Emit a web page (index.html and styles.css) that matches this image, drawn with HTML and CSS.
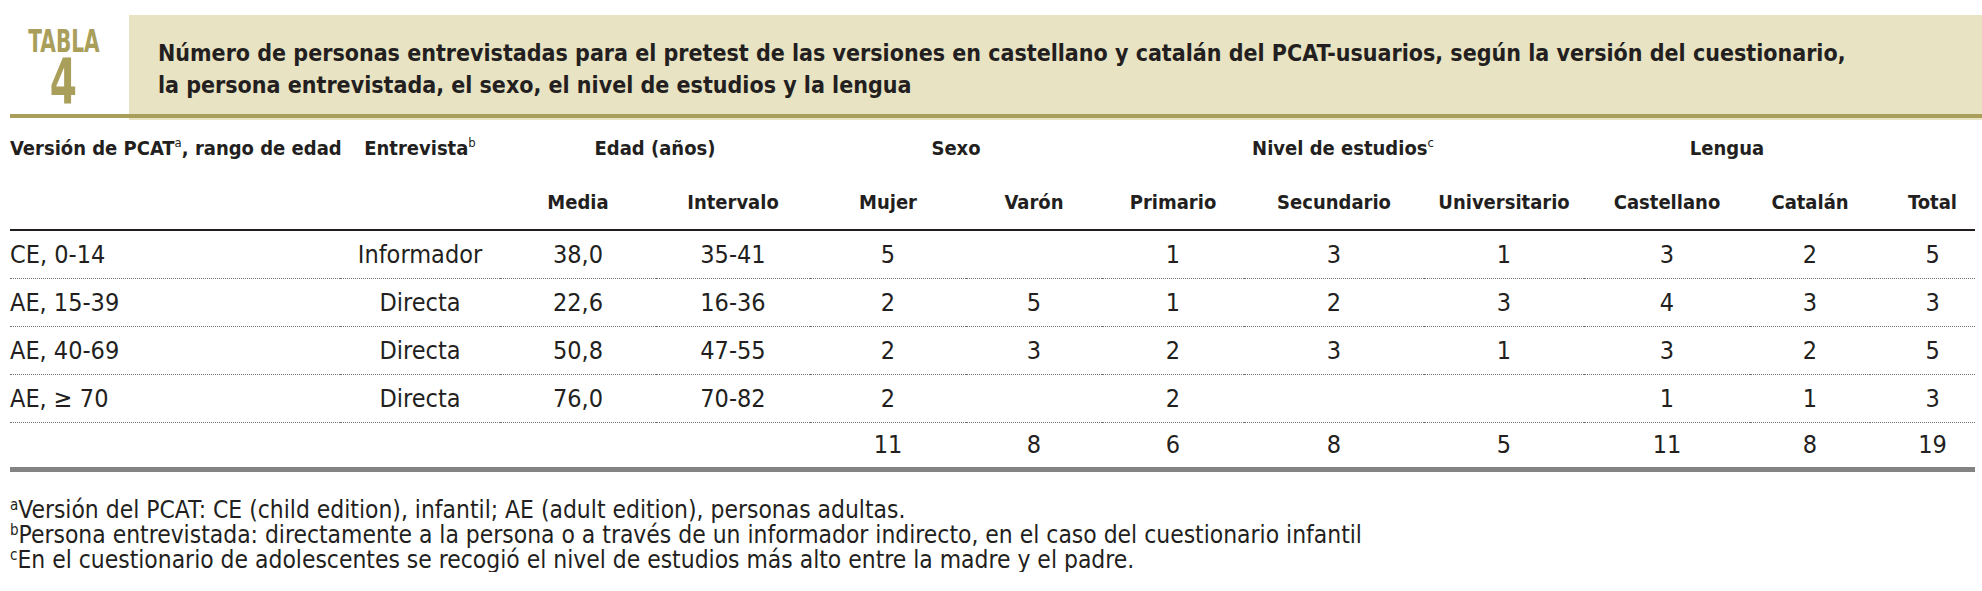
FILE: index.html
```html
<!DOCTYPE html>
<html lang="es">
<head>
<meta charset="utf-8">
<title>Tabla 4</title>
<link rel="stylesheet" href="styles.css">
</head>
<body>
<div class="page">
  <div class="head">
    <div class="tag">
      <div class="tag-word">TABLA</div>
      <div class="tag-num">4</div>
    </div>
    <div class="caption">Número de personas entrevistadas para el pretest de las versiones en castellano y catalán del PCAT-usuarios, según la versión del cuestionario,<br>la persona entrevistada, el sexo, el nivel de estudios y la lengua</div>
  </div>
  <div class="gold-rule"></div>
  <div class="beige-strip"></div>
  <table class="data">
    <colgroup>
      <col class="c1"><col class="c2"><col class="c3"><col class="c4"><col class="c5"><col class="c6"><col class="c7"><col class="c8"><col class="c9"><col class="c10"><col class="c11"><col class="c12">
    </colgroup>
    <thead>
      <tr class="h1">
        <th class="left">Versión de PCAT<sup>a</sup>, rango de edad</th>
        <th>Entrevista<sup>b</sup></th>
        <th colspan="2">Edad (años)</th>
        <th colspan="2">Sexo</th>
        <th colspan="3">Nivel de estudios<sup>c</sup></th>
        <th colspan="2">Lengua</th>
        <th></th>
      </tr>
      <tr class="h2">
        <th></th>
        <th></th>
        <th>Media</th>
        <th>Intervalo</th>
        <th>Mujer</th>
        <th>Varón</th>
        <th>Primario</th>
        <th>Secundario</th>
        <th>Universitario</th>
        <th>Castellano</th>
        <th>Catalán</th>
        <th class="tot">Total</th>
      </tr>
    </thead>
    <tbody>
      <tr>
        <td class="left">CE, 0-14</td><td>Informador</td><td>38,0</td><td>35-41</td><td>5</td><td></td><td>1</td><td>3</td><td>1</td><td>3</td><td>2</td><td class="tot">5</td>
      </tr>
      <tr>
        <td class="left">AE, 15-39</td><td>Directa</td><td>22,6</td><td>16-36</td><td>2</td><td>5</td><td>1</td><td>2</td><td>3</td><td>4</td><td>3</td><td class="tot">3</td>
      </tr>
      <tr>
        <td class="left">AE, 40-69</td><td>Directa</td><td>50,8</td><td>47-55</td><td>2</td><td>3</td><td>2</td><td>3</td><td>1</td><td>3</td><td>2</td><td class="tot">5</td>
      </tr>
      <tr>
        <td class="left">AE, ≥ 70</td><td>Directa</td><td>76,0</td><td>70-82</td><td>2</td><td></td><td>2</td><td></td><td></td><td>1</td><td>1</td><td class="tot">3</td>
      </tr>
      <tr class="sum">
        <td class="left"></td><td></td><td></td><td></td><td>11</td><td>8</td><td>6</td><td>8</td><td>5</td><td>11</td><td>8</td><td class="tot">19</td>
      </tr>
    </tbody>
  </table>
  <div class="notes">
    <p><sup>a</sup>Versión del PCAT: CE (child edition), infantil; AE (adult edition), personas adultas.</p>
    <p><sup>b</sup>Persona entrevistada: directamente a la persona o a través de un informador indirecto, en el caso del cuestionario infantil</p>
    <p><sup>c</sup>En el cuestionario de adolescentes se recogió el nivel de estudios más alto entre la madre y el padre.</p>
  </div>
</div>
</body>
</html>
```

FILE: styles.css
```css
* { box-sizing: border-box; }

html, body {
  margin: 0;
  padding: 0;
  background: #ffffff;
}

body {
  font-family: "DejaVu Sans Condensed", "DejaVu Sans", sans-serif;
  font-stretch: condensed;
  color: #231f20;
}

.page {
  padding: 15px 0 0 10px;
}

.head {
  display: flex;
  align-items: stretch;
}

.tag {
  width: 119px;
  flex: 0 0 119px;
  padding: 11px 12px 0 0;
  display: flex;
  flex-direction: column;
  align-items: center;
  color: #aa9e5b;
  font-weight: 700;
}

.tag-word {
  font-size: 32px;
  line-height: 30px;
  transform: scaleX(0.7);
}

.tag-num {
  font-size: 62px;
  line-height: 46px;
  margin-top: 3px;
  transform: scaleX(0.7);
}

.caption {
  flex: 1;
  background: #e8e3c3;
  padding: 22px 20px 13px 29px;
  font-size: 23px;
  line-height: 32px;
  font-weight: 700;
  color: #231f20;
  white-space: nowrap;
}

.gold-rule {
  height: 4px;
  background: #aa9e5b;
}

.beige-strip {
  height: 2px;
  margin-left: 119px;
  background: #e8e3c3;
}

.data {
  width: 1965px;
  table-layout: fixed;
  border-collapse: collapse;
}

.c1 { width: 330px; }
.c2 { width: 160px; }
.c3 { width: 156px; }
.c4 { width: 154px; }
.c5 { width: 156px; }
.c6 { width: 136px; }
.c7 { width: 142px; }
.c8 { width: 180px; }
.c9 { width: 160px; }
.c10 { width: 166px; }
.c11 { width: 120px; }
.c12 { width: 105px; }

.data th, .data td {
  padding: 0;
  text-align: center;
  white-space: nowrap;
}

.data .left {
  text-align: left;
}

.data .tot {
  padding-left: 20px;
}

.data th {
  font-size: 20px;
  font-weight: 700;
}

.h1 th {
  height: 55px;
  vertical-align: middle;
}

.h2 th {
  height: 55px;
  vertical-align: middle;
  border-bottom: 2px solid #231f20;
}

.data sup {
  font-size: 13px;
  font-weight: 400;
  vertical-align: 8px;
  line-height: 0;
}

.data td {
  font-size: 25px;
  height: 48px;
  vertical-align: middle;
  border-bottom: 1px dotted #6d6d6d;
}

.data .sum td {
  height: 47px;
  border-bottom: 5px solid #838383;
}

.notes {
  padding-top: 25px;
  font-size: 24.4px;
  line-height: 25px;
}

.notes p {
  margin: 0;
}

.notes sup {
  font-size: 15px;
  vertical-align: 8px;
  line-height: 0;
}
```
